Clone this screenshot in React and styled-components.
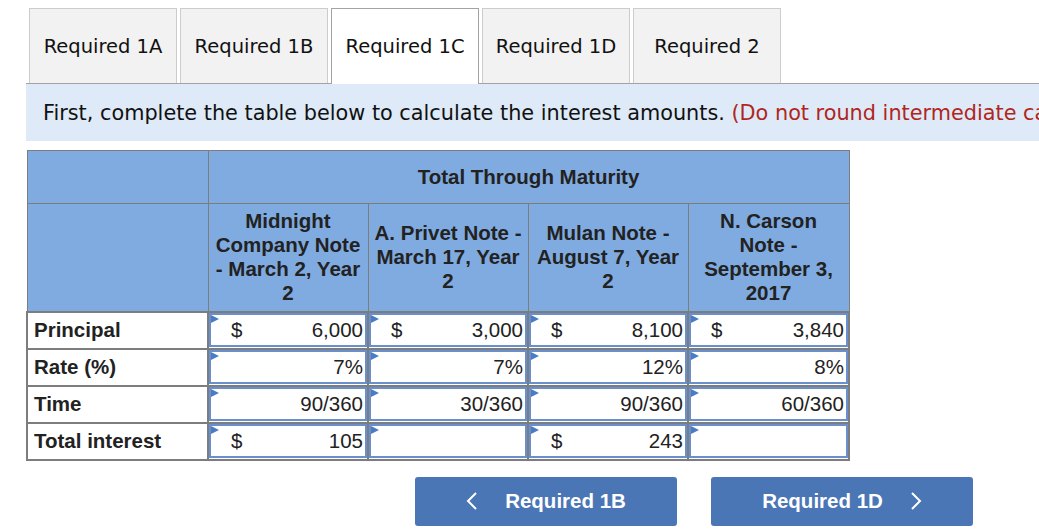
import React from "react";
import styled, { createGlobalStyle } from "styled-components";

const GlobalStyle = createGlobalStyle`
  html, body {
    margin: 0;
    padding: 0;
    background: #ffffff;
    overflow: hidden;
  }
  body {
    font-family: "Liberation Sans", Arial, sans-serif;
    color: #222222;
  }
`;

const tabs = ["Required 1A", "Required 1B", "Required 1C", "Required 1D", "Required 2"];

const notes = [
  "Midnight Company Note - March 2, Year 2",
  "A. Privet Note - March 17, Year 2",
  "Mulan Note - August 7, Year 2",
  "N. Carson Note\u00a0- September 3, 2017",
];

const rows = [
  {
    label: "Principal",
    cells: [
      { dollar: true, value: "6,000" },
      { dollar: true, value: "3,000" },
      { dollar: true, value: "8,100" },
      { dollar: true, value: "3,840" },
    ],
  },
  {
    label: "Rate (%)",
    cells: [{ value: "7%" }, { value: "7%" }, { value: "12%" }, { value: "8%" }],
  },
  {
    label: "Time",
    cells: [
      { value: "90/360" },
      { value: "30/360" },
      { value: "90/360" },
      { value: "60/360" },
    ],
  },
  {
    label: "Total interest",
    cells: [
      { dollar: true, value: "105" },
      { value: "" },
      { dollar: true, value: "243" },
      { value: "" },
    ],
  },
];

const Chevron = ({ dir }) => (
  <svg width="12" height="20" viewBox="0 0 12 20">
    <polyline
      points={dir === "left" ? "10,2 2,10 10,18" : "2,2 10,10 2,18"}
      fill="none"
      stroke="#ffffff"
      strokeWidth="2"
    />
  </svg>
);

const App = () => {
  return (
    <Page>
      <GlobalStyle />
      <TabBar>
        {tabs.map((t) => (
          <Tab key={t} $active={t === "Required 1C"}>
            {t}
          </Tab>
        ))}
      </TabBar>
      <Banner>
        First, complete the table below to calculate the interest amounts.{" "}
        <RedText>(Do not round intermediate calculations.)</RedText>
      </Banner>

      <Table>
        <colgroup>
          <col style={{ width: 181 }} />
          <col style={{ width: 160 }} />
          <col style={{ width: 160 }} />
          <col style={{ width: 160 }} />
          <col style={{ width: 161 }} />
        </colgroup>
        <thead>
          <TopHeadRow>
            <HeadCell />
            <HeadCell colSpan={4}>Total Through Maturity</HeadCell>
          </TopHeadRow>
          <NoteHeadRow>
            <HeadCell />
            {notes.map((n) => (
              <HeadCell key={n}>{n}</HeadCell>
            ))}
          </NoteHeadRow>
        </thead>
        <tbody>
          {rows.map((r) => (
            <DataRow key={r.label}>
              <LabelCell>{r.label}</LabelCell>
              {r.cells.map((c, i) => (
                <InputCell key={i}>
                  <InputBox>
                    <Flag />
                    <Dollar>{c.dollar ? "$" : ""}</Dollar>
                    <Value>{c.value}</Value>
                  </InputBox>
                </InputCell>
              ))}
            </DataRow>
          ))}
        </tbody>
      </Table>

      <NavRow>
        <NavButton>
          <Chevron dir="left" />
          Required 1B
        </NavButton>
        <NavButton>
          Required 1D
          <Chevron dir="right" />
        </NavButton>
      </NavRow>
    </Page>
  );
};

export default App;

const Page = styled.div`
  padding: 8px 0 0 26px;
  width: 1013px;
`;

const TabBar = styled.div`
  display: flex;
  gap: 3px;
  padding-left: 3px;
  border-bottom: 1px solid #a3a3a3;
  height: 75px;
`;

const Tab = styled.div`
  box-sizing: border-box;
  width: 148px;
  height: ${(p) => (p.$active ? "76px" : "75px")};
  display: flex;
  align-items: center;
  justify-content: center;
  font-family: "DejaVu Sans", Verdana, sans-serif;
  font-size: 19.5px;
  color: #111111;
  background: ${(p) => (p.$active ? "#ffffff" : "#f2f2f2")};
  border: 1px solid ${(p) => (p.$active ? "#a3a3a3" : "#cccccc")};
  border-bottom: 0;
  margin-bottom: ${(p) => (p.$active ? "-1px" : "0")};
  padding-bottom: ${(p) => (p.$active ? "1px" : "0")};
`;

const Banner = styled.div`
  height: 57px;
  display: flex;
  align-items: center;
  padding-left: 17px;
  background: #deeaf7;
  font-family: "DejaVu Sans", Verdana, sans-serif;
  font-size: 20.8px;
  color: #111111;
  white-space: pre;
  overflow: hidden;
`;

const RedText = styled.span`
  color: #b0261c;
`;

const Table = styled.table`
  margin-top: 9px;
  border-collapse: collapse;
  table-layout: fixed;
  width: 822px;
  font-size: 20.5px;
`;

const TopHeadRow = styled.tr`
  height: 53px;
`;

const NoteHeadRow = styled.tr`
  height: 108px;
`;

const HeadCell = styled.th`
  background: #80abe0;
  border: 1px solid #7d7d7d;
  padding: 0 3px;
  font-weight: bold;
  line-height: 24px;
  text-align: center;
  vertical-align: middle;
  color: #222222;
`;

const DataRow = styled.tr`
  height: 37px;
`;

const LabelCell = styled.td`
  border: 2px solid #7d7d7d;
  padding: 0 0 0 6px;
  font-weight: bold;
  color: #222222;
`;

const InputCell = styled.td`
  border: 2px solid #7d7d7d;
  padding: 0;
`;

const InputBox = styled.div`
  position: relative;
  box-sizing: border-box;
  height: 34px;
  display: flex;
  align-items: center;
  justify-content: space-between;
  padding: 0 2px 0 20px;
  border: 2px solid #6990cc;
  background: #ffffff;
  color: #222222;
`;

const Flag = styled.span`
  position: absolute;
  top: 0;
  left: 0;
  width: 0;
  height: 0;
  border-top: 4px solid transparent;
  border-bottom: 4px solid transparent;
  border-left: 8px solid #4a7cc3;
`;

const Dollar = styled.span``;

const Value = styled.span``;

const NavRow = styled.div`
  display: flex;
  gap: 34px;
  margin-top: 16px;
  padding-left: 389px;
`;

const NavButton = styled.button`
  width: 262px;
  height: 49px;
  display: flex;
  align-items: center;
  justify-content: center;
  gap: 27px;
  border: none;
  border-radius: 3px;
  background: #4a76b5;
  color: #ffffff;
  font-family: "Liberation Sans", Arial, sans-serif;
  font-weight: bold;
  font-size: 20.5px;
`;
